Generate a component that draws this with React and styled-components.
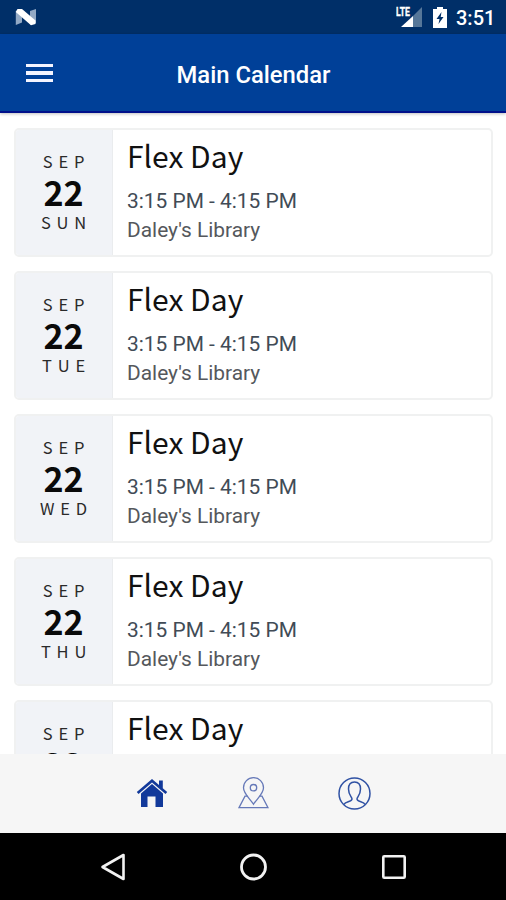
import React from "react"
import styled, { createGlobalStyle } from 'styled-components';

const GlobalStyle = createGlobalStyle`
    * {
        box-sizing: border-box;
    }

    body {
        margin: 0;
        background-color: #fff;
        font-family: Roboto, "Liberation Sans", sans-serif;
    }
`;

const Screen = styled.div`
    display: flex;
    flex-direction: column;
    width: 506px;
    height: 900px;
    overflow: hidden;
`;

const StatusBar = styled.div`
    display: flex;
    align-items: center;
    justify-content: space-between;
    flex: none;
    height: 34px;
    padding: 0 11px 0 15px;
    background-color: #002f68;
    color: #fff;
`;

const StatusIcons = styled.div`
    display: flex;
    align-items: center;
`;

const Clock = styled.span`
    width: 39px;
    margin-left: 9px;
    padding-top: 2px;
    font-size: 20px;
    font-weight: 500;
    line-height: 24px;
    white-space: nowrap;
`;

const Header = styled.header`
    display: grid;
    grid-template-columns: 80px 1fr 80px;
    align-items: center;
    flex: none;
    height: 79px;
    border-bottom: 2px solid #00108a;
    background-color: #004098;
    box-shadow: 0 1px 3px rgba(0, 0, 0, 0.25);
`;

const MenuButton = styled.button`
    display: flex;
    flex-direction: column;
    gap: 4px;
    width: 27px;
    margin-left: 26px;
    padding: 1px 0 0;
    border: none;
    background: none;
`;

const MenuLine = styled.span`
    height: 3.5px;
    background-color: #f4f4ff;
`;

const Title = styled.h1`
    margin: 0;
    padding: 5px 0 0 1px;
    color: #fff;
    font-size: 23.8px;
    font-weight: 500;
    line-height: 28px;
    text-align: center;
    white-space: nowrap;
`;

const EventList = styled.main`
    display: flex;
    flex-direction: column;
    gap: 14px;
    flex: 1;
    min-height: 0;
    padding: 15px 13px 0 14px;
    overflow: hidden;
`;

const Card = styled.article`
    display: flex;
    flex: none;
    height: 129px;
    border: 2px solid #f0f1f1;
    border-radius: 5px;
    background-color: #fff;
    overflow: hidden;
`;

const DateBox = styled.div`
    display: flex;
    flex-direction: column;
    align-items: center;
    width: 97px;
    padding-top: 19px;
    padding-right: 1px;
    border-right: 1px solid #eaecee;
    background-color: #f1f3f7;
    font-family: "Noto Sans CJK SC", "Open Sans", sans-serif;
`;

const DateLabel = styled.span`
    color: #2a2a2a;
    font-size: 16.5px;
    line-height: 24px;
    letter-spacing: 5.8px;
    margin-right: -6px;
`;

const DayNumber = styled.span`
    height: 37px;
    color: #0a0a0a;
    font-size: 34px;
    font-weight: 700;
    line-height: 37px;
`;

const Details = styled.div`
    padding: 4px 0 0 14px;
`;

const EventName = styled.h2`
    margin: 0 0 11px;
    color: #111;
    font-family: "Noto Sans CJK SC", "Open Sans", sans-serif;
    font-size: 30px;
    font-weight: 400;
    line-height: 42px;
`;

const EventInfo = styled.div`
    color: ${(props) => props.$color};
    font-size: 20.9px;
    line-height: 29px;
    white-space: nowrap;
`;

const TabBar = styled.nav`
    display: flex;
    align-items: center;
    justify-content: center;
    flex: none;
    height: 79px;
    padding-bottom: 1px;
    background-color: #f6f6f6;
`;

const Tab = styled.div`
    display: flex;
    justify-content: center;
    width: 101px;
`;

const SystemNav = styled.div`
    display: flex;
    align-items: center;
    justify-content: center;
    flex: none;
    height: 67px;
    background-color: #000;
`;

const SystemButton = styled.div`
    display: flex;
    justify-content: center;
    width: 140.5px;
`;

const events = ['SUN', 'TUE', 'WED', 'THU', 'FRI'];

const NougatIcon = () => (
    <svg width="22" height="18" viewBox="0 0 22 18">
        <path d="M0.8 3 7 1v13.5L0.8 17ZM15 3l6-2v14l-6 1.5Z" fill="#92a9c5" />
        <path d="M0.8 4 2.5 1H7L20.5 12.5v3.5l-4.5 1.2Z" fill="#fff" />
    </svg>
);

const SignalIcon = () => (
    <svg width="27" height="22" viewBox="0 0 27 22">
        <path d="M17 10 26 1v20h-9Z" fill="#567799" />
        <path d="M17 10v11H5Z" fill="#fff" />
        <text x="0" y="10" fill="#fff" stroke="#fff" strokeWidth="0.3" fontSize="12" fontWeight="700" textLength="14" lengthAdjust="spacingAndGlyphs">LTE</text>
    </svg>
);

const Battery = styled.svg`
    margin-left: 10px;
`;

const BatteryIcon = () => (
    <Battery width="14" height="22" viewBox="0 0 14 22">
        <path d="M4 1h6v2h4v19H0V3h4Z" fill="#fff" />
        <path d="M8.5 6 3.5 13h3L5.5 18 10.5 11H7.7Z" fill="#002f68" />
    </Battery>
);

const HomeIcon = () => (
    <svg width="32" height="30" viewBox="0 0 32 30" fill="#12399a">
        <path d="M16 1 0.8 14l1.7 2L16 4.4 29.5 16l1.7-2-4.4-3.8V2.5H23v4.6Z" />
        <path d="M16 6 5 15.5V29h6.5V18.5h8V29H27V15.5Z" />
    </svg>
);

const MapIcon = () => (
    <svg width="32" height="34" viewBox="-0.5 -0.7 32 34" fill="none" stroke="#6679b8" strokeWidth="1.3">
        <path d="M16 27.5C12.5 22 6 17 6 11a10 10 0 0 1 20 0c0 6-6.5 11-10 16.5Z" />
        <circle cx="16" cy="11" r="3.2" />
        <path d="M10 19.5H7.5L1.5 31h29l-6-11.5H22" />
    </svg>
);

const ProfileIcon = () => (
    <svg width="34" height="34" viewBox="-0.5 -0.5 34 34" fill="none" stroke="#3052a4" strokeWidth="1.5">
        <circle cx="17" cy="17" r="15.5" />
        <path d="M6.5 28c1-3 8-2.5 8-5.5 0-2-3.5-4-3.5-10 0-4.5 2.3-7 6-7s6 2.5 6 7c0 6-3.5 8-3.5 10 0 3 7 2.5 8 5.5" />
    </svg>
);

function EventCard({ weekday }) {
    return (
        <Card>
            <DateBox>
                <DateLabel>SEP</DateLabel>
                <DayNumber>22</DayNumber>
                <DateLabel>{weekday}</DateLabel>
            </DateBox>
            <Details>
                <EventName>Flex Day</EventName>
                <EventInfo $color="#414b56">3:15 PM - 4:15 PM</EventInfo>
                <EventInfo $color="#55585c">Daley's Library</EventInfo>
            </Details>
        </Card>
    );
}

function App() {
    return (
        <Screen>
            <GlobalStyle />
            <StatusBar>
                <NougatIcon />
                <StatusIcons>
                    <SignalIcon />
                    <BatteryIcon />
                    <Clock>3:51</Clock>
                </StatusIcons>
            </StatusBar>
            <Header>
                <MenuButton aria-label="Menu">
                    <MenuLine />
                    <MenuLine />
                    <MenuLine />
                </MenuButton>
                <Title>Main Calendar</Title>
            </Header>
            <EventList>
                {events.map((weekday) => (
                    <EventCard key={weekday} weekday={weekday} />
                ))}
            </EventList>
            <TabBar>
                <Tab><HomeIcon /></Tab>
                <Tab><MapIcon /></Tab>
                <Tab><ProfileIcon /></Tab>
            </TabBar>
            <SystemNav>
                <SystemButton>
                    <svg width="26" height="28" viewBox="0 0 26 28" fill="none" stroke="#f2f2f2" strokeWidth="2.6" strokeLinejoin="round">
                        <path d="M23.5 2v24L2.5 14Z" />
                    </svg>
                </SystemButton>
                <SystemButton>
                    <svg width="28" height="28" viewBox="-0.5 0 28 28" fill="none" stroke="#f2f2f2" strokeWidth="2.8">
                        <circle cx="14" cy="14" r="12" />
                    </svg>
                </SystemButton>
                <SystemButton>
                    <svg width="26" height="26" viewBox="0 0 26 26" fill="none" stroke="#f2f2f2" strokeWidth="2.6">
                        <rect x="2.3" y="2.3" width="21.4" height="21.4" rx="1" />
                    </svg>
                </SystemButton>
            </SystemNav>
        </Screen>
    );
}

export default App;
